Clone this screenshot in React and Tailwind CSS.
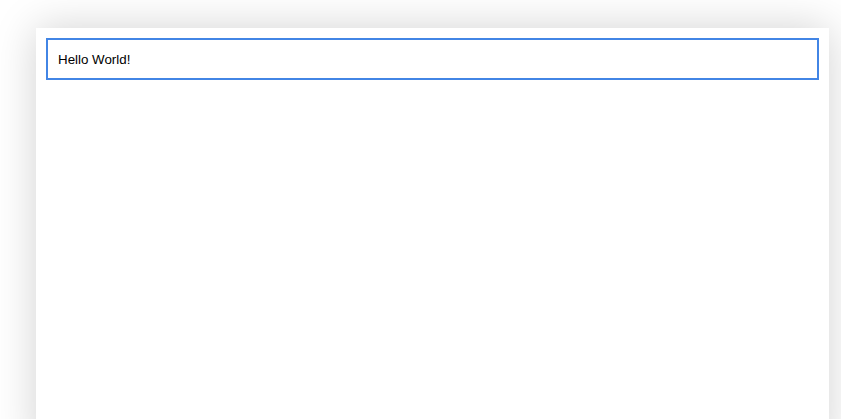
import React from "react";

export default function App() {
  return (
    <div className="w-[841px] h-[419px] bg-white overflow-hidden pt-[28px] pl-[36px]">
      <div className="w-[793px] h-[420px] bg-white shadow-[0_0_40px_rgba(0,0,0,0.18)] p-[10px]">
        <input
          defaultValue="Hello World!"
          className="block w-[773px] h-[42px] border-2 border-[#4285e5] px-[10px] text-[13.33px] text-black outline-none font-['Liberation_Sans',Arial,sans-serif]"
        />
      </div>
    </div>
  );
}
